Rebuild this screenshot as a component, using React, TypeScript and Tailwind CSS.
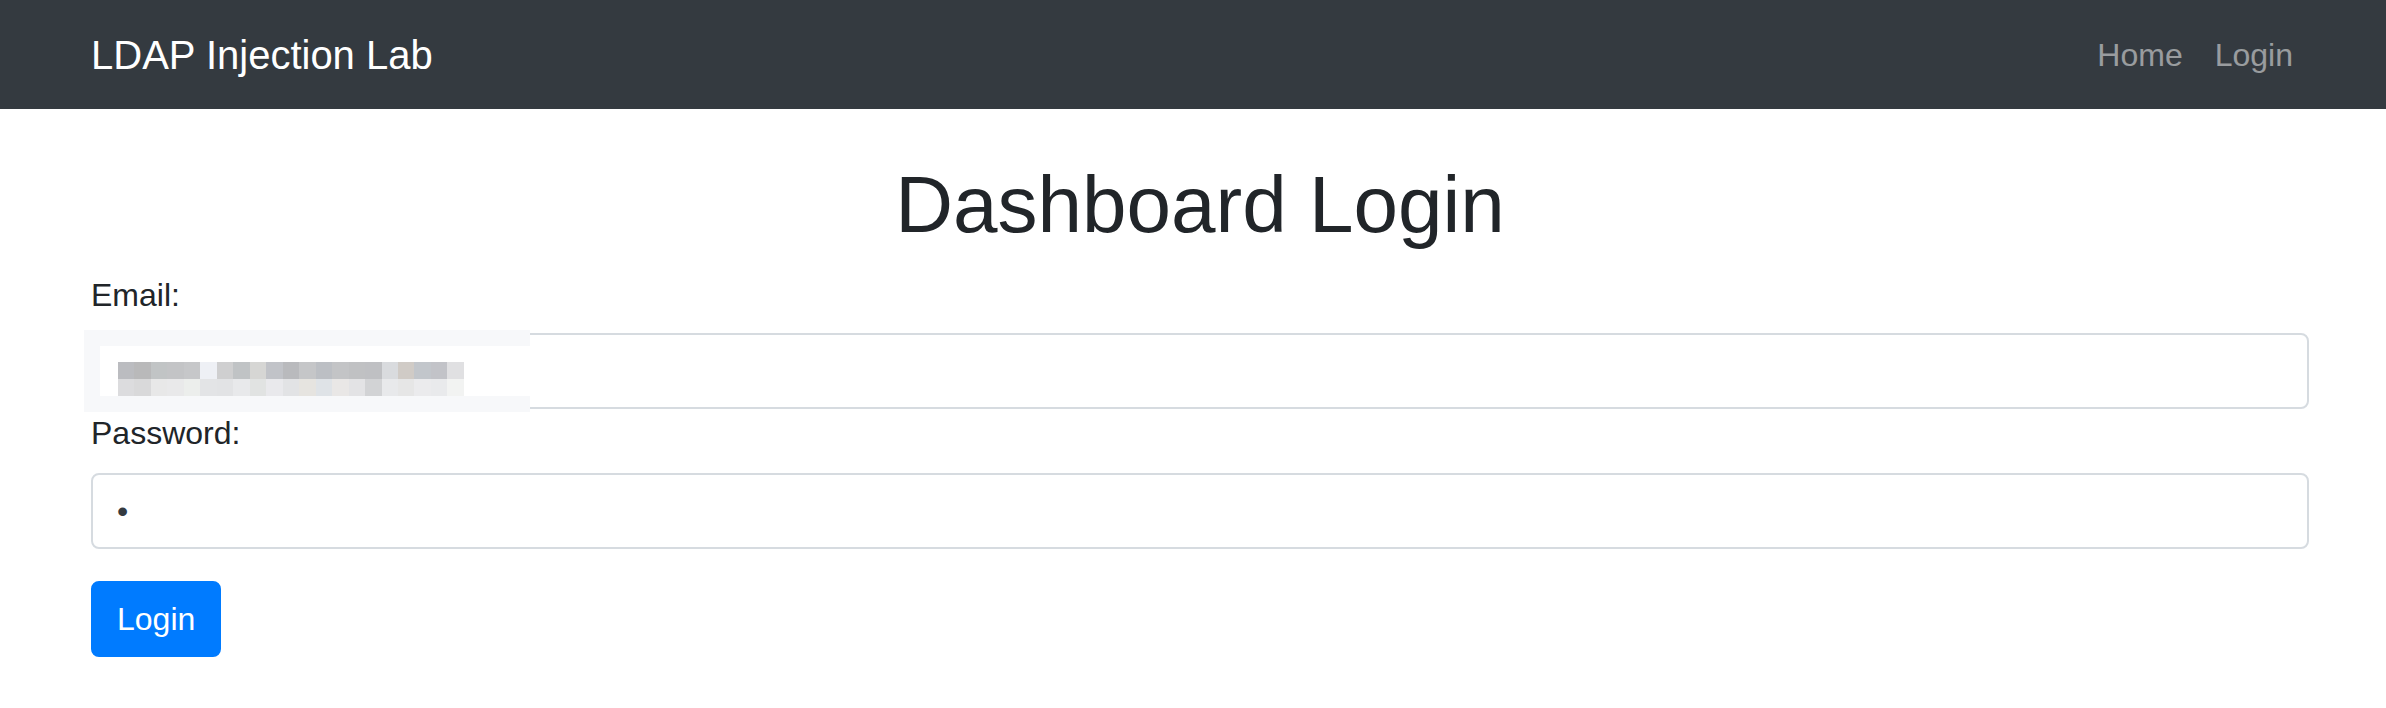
import React from 'react';

// pixelated redaction over the email value
const topRow = [
  'bg-[#bbbcc0]', 'bg-[#b9b9ba]', 'bg-[#c1c4c5]', 'bg-[#c3c4c6]', 'bg-[#c6c7c9]', 'bg-[#eef0f5]', 'bg-[#cfcfd0]',
  'bg-[#c0c3c5]', 'bg-[#d6d6d4]', 'bg-[#c1c3c8]', 'bg-[#b9babd]', 'bg-[#c5c6c8]', 'bg-[#bcbfc4]', 'bg-[#c3c4c6]',
  'bg-[#c0c1c3]', 'bg-[#bfc0c3]', 'bg-[#d9dbde]', 'bg-[#d0cbc6]', 'bg-[#c2c6cb]', 'bg-[#c2c3c8]', 'bg-[#e0e0e2]',
];
const bottomRow = [
  'bg-[#dcdcde]', 'bg-[#d9d9da]', 'bg-[#e8e8e8]', 'bg-[#e9e9ea]', 'bg-[#eceeec]', 'bg-[#e3e4e6]', 'bg-[#e2e3e5]',
  'bg-[#e8e9eb]', 'bg-[#e1e3e2]', 'bg-[#e9e9ec]', 'bg-[#e2e3e5]', 'bg-[#e6e4e0]', 'bg-[#dfe3e7]', 'bg-[#e9e7e6]',
  'bg-[#e3e3e5]', 'bg-[#d2d3d5]', 'bg-[#e8e9eb]', 'bg-[#e6e6e6]', 'bg-[#ebebed]', 'bg-[#e9eaec]', 'bg-[#f2f3f2]',
];

const Redacted = () => (
  <div className="absolute left-[-7px] top-[-3px] h-[82px] w-[446px] bg-[#f7f8fa] py-[16px] pl-[16px]">
    <div className="h-full w-full bg-white pl-[18px] pt-[16px]">
      <div className="flex w-[346px]">
        {topRow.map((c, i) => (
          <div key={i} className={`h-[17px] flex-1 ${c}`} />
        ))}
      </div>
      <div className="flex w-[346px]">
        {bottomRow.map((c, i) => (
          <div key={i} className={`h-[17px] flex-1 ${c}`} />
        ))}
      </div>
    </div>
  </div>
);

const Navbar = () => (
  <nav className="flex h-[109px] items-center justify-between bg-[#343a40] pl-[91px] pr-[77px]">
    <a className="text-[40px] leading-[60px] text-white">LDAP Injection Lab</a>
    <div className="flex">
      <a className="px-[16px] text-[32px] leading-[48px] text-white/50">Home</a>
      <a className="px-[16px] text-[32px] leading-[48px] text-white/50">Login</a>
    </div>
  </nav>
);

export default function App() {
  return (
    <div className="min-h-screen bg-white font-['Liberation_Sans',Arial,sans-serif] text-[#212529]">
      <Navbar />
      <main className="pl-[91px] pr-[77px]">
        <h1 className="mb-[18px] mt-[48px] text-center text-[80px] font-normal leading-[96px]">Dashboard Login</h1>
        <form>
          <label className="mb-[14px] block text-[32px] leading-[48px]">Email:</label>
          <div className="relative">
            <input
              type="email"
              readOnly
              className="block h-[76px] w-full rounded-[8px] border-2 border-[#d6dbe0] bg-white px-[24px] text-[32px] outline-none"
            />
            <Redacted />
          </div>
          <label className="mb-[16px] block text-[32px] leading-[48px]">Password:</label>
          <input
            type="password"
            readOnly
            defaultValue="a"
            className="block h-[76px] w-full rounded-[8px] border-2 border-[#d6dbe0] bg-white px-[24px] text-[32px] text-[#343a40] outline-none"
          />
          <button
            type="button"
            className="mt-[32px] h-[76px] rounded-[8px] border-2 border-[#007bff] bg-[#007bff] px-[24px] text-[32px] leading-[48px] text-white"
          >
            Login
          </button>
        </form>
      </main>
    </div>
  );
}
